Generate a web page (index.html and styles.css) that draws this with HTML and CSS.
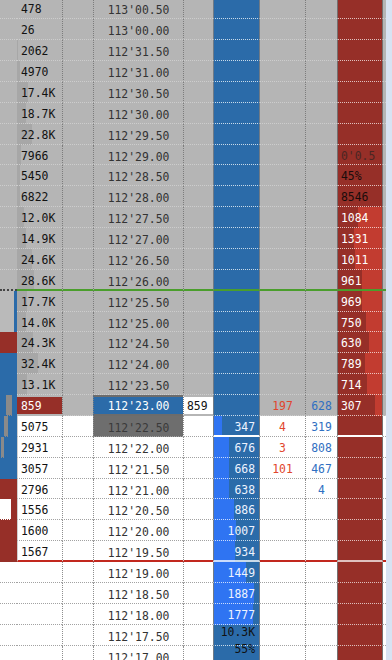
FILE: index.html
```html
<!DOCTYPE html>
<html lang="en">
<head>
  <meta charset="UTF-8" />
  <meta name="viewport" content="width=device-width, initial-scale=1" />
  <title>DOM Ladder</title>
  <link rel="stylesheet" href="styles.css">
</head>
<body>
  <div class="dom">
    <div class="ladder" id="ladder"></div>
    <div class="scroll"></div>
  </div>

  <script>
    // v = traded volume, vb = volume bar, a = ask size, aw = ask bar split,
    // bid = bid size, bw = bid bar, s/b = sold/bought at price, ch = mini chart cell
    const rows = [
      { v: "478" },
      { v: "26" },
      { v: "2062", vb: 1 },
      { v: "4970", vb: 3 },
      { v: "17.4K", vb: 11 },
      { v: "18.7K", vb: 9 },
      { v: "22.8K", vb: 15 },
      { v: "7966", vb: 4, a: "0'0.5", ac: "faint" },
      { v: "5450", vb: 3, a: "45%", ac: "dark" },
      { v: "6822", vb: 3, a: "8546", ac: "dark" },
      { v: "12.0K", vb: 7, a: "1084", aw: 20 },
      { v: "14.9K", vb: 9, a: "1331", aw: 16 },
      { v: "24.6K", vb: 15, a: "1011", aw: 17 },
      { v: "28.6K", vb: 17, a: "961", aw: 24, ch: "edge" },
      { v: "17.7K", vb: 10, a: "969", aw: 24, ch: "gb" },
      { v: "14.0K", vb: 9, a: "750", aw: 28, ch: "gb" },
      { v: "24.3K", vb: 16, a: "630", aw: 31, ch: "red" },
      { v: "32.4K", vb: 21, a: "789", aw: 27, ch: "blue" },
      { v: "13.1K", vb: 10, a: "714", aw: 29, ch: "blue" },
      { v: "859", a: "307", aw: 37, s: "197", b: "628", last: "859", ch: "blue candle1" },
      { v: "5075", bid: "347", bw: 8, s: "4", b: "319", ch: "blue candle2" },
      { v: "2931", bid: "676", bw: 15, s: "3", b: "808", ch: "blue candle3" },
      { v: "3057", bid: "668", bw: 15, s: "101", b: "467", ch: "blue" },
      { v: "2796", bid: "638", bw: 15, b: "4", ch: "red" },
      { v: "1556", bid: "886", bw: 20, ch: "redw" },
      { v: "1600", bid: "1007", bw: 22, ch: "red" },
      { v: "1567", bid: "934", bw: 21, ch: "red" },
      { bid: "1449", bw: 32 },
      { bid: "1887", bw: 40 },
      { bid: "1777", bw: 39 },
      { bid: "10.3K", bc: "dark total" },
      { bid: "55%", bc: "dark ratio" },
    ];

    const ladder = document.getElementById("ladder");

    function priceAt(i) {
      if (i === 0) return "113'00.50";
      if (i === 1) return "113'00.00";
      const t = 31.5 - (i - 2) * 0.5;
      return "112'" + t.toFixed(2).padStart(5, "0");
    }

    function cell(cls, text, w) {
      const d = document.createElement("div");
      d.className = cls;
      if (text) d.textContent = text;
      if (w !== undefined) d.style.setProperty("--w", w + "px");
      return d;
    }

    rows.forEach((r, i) => {
      const row = document.createElement("div");
      row.className = "row " + (i < 20 ? "hi" : "lo");
      if (i === 13) row.classList.add("green");
      if (i === 19) row.classList.add("cur");
      if (i === 20) row.classList.add("mark");
      if (i === 26) row.classList.add("redline");
      if (i > 19 && i < 27) row.classList.add("boxed");

      row.appendChild(cell("chart " + (r.ch || "")));
      row.appendChild(cell("vol" + (r.vb ? " bar" : ""), r.v, r.vb));
      row.appendChild(cell("gap"));
      row.appendChild(cell("price", priceAt(i)));
      row.appendChild(cell("last", r.last));
      row.appendChild(cell("bid" + (r.bw ? " bar" : "") + (r.bc ? " " + r.bc : ""), r.bid, r.bw));
      row.appendChild(cell("sold", r.s));
      row.appendChild(cell("bought", r.b));
      row.appendChild(cell("ask" + (r.aw ? " bar" : "") + (r.ac ? " " + r.ac : ""), r.a, r.aw));
      row.appendChild(cell("edge-col"));
      ladder.appendChild(row);
    });
  </script>
</body>
</html>
```

FILE: styles.css
```css
* {
  box-sizing: border-box;
}
body {
  margin: 0;
  background: #fff;
  font-family: "DejaVu Sans Mono", monospace;
  font-size: 11.4px;
  overflow: hidden;
}
.dom {
  display: flex;
  width: 392px;
  height: 660px;
  overflow: hidden;
}
.ladder {
  width: 386px;
  margin-top: -1.6px;
}
.scroll {
  width: 6px;
  background: #d8e3f3;
}

/* rows */
.row {
  display: grid;
  grid-template-columns: 17px 45px 31px 90px 30px 47px 45px 32px 46px 3px;
  height: 20.88px;
  line-height: 22px;
}
.row > div {
  background: #b5b5b5;
  border-bottom: 1px dotted #cdcdcd;
  white-space: nowrap;
  overflow: hidden;
}
.row.lo > div {
  background: #fff;
  border-bottom-color: #a2a2a2;
}

/* columns */
.vol {
  padding-left: 4px;
  color: #111;
}
.vol.bar {
  background: linear-gradient(90deg, #a7a7a7 var(--w), #b5b5b5 var(--w)) !important;
}
.gap,
.price,
.last,
.bought {
  border-left: 1px dotted #7c7c7c;
}
.row.lo .gap,
.row.lo .price,
.row.lo .last,
.row.lo .bought {
  border-left-color: #8e8e8e;
}
.price {
  text-align: center;
  color: #333;
  line-height: 24px;
}
.last {
  padding-left: 3px;
  color: #111;
}
.sold {
  text-align: center;
  color: #e1462c;
}
.bought {
  text-align: center;
  color: #2f6fc2;
}

.row > .bid {
  background: #2b6ba9;
  border-left: 1px solid #6f7a86;
  border-right: 1px solid #6f7a86;
  border-bottom-color: rgba(255, 255, 255, 0.75);
  text-align: right;
  padding-right: 4px;
  color: #eef3ff;
}
.row.lo > .bid {
  background: #2b6ba9;
  border-bottom-color: rgba(255, 255, 255, 0.75);
}
.row > .bid.bar {
  background: linear-gradient(90deg, #2f74f2 var(--w), #2b6ba9 var(--w));
}
.bid.dark {
  color: #111;
}
.row > .bid.total {
  line-height: 14px;
  overflow: visible;
}
.row > .bid.ratio {
  line-height: 7px;
  overflow: visible;
}

.row > .ask {
  background: #962f28;
  border-left: 1px solid #757070;
  border-right: 1px solid #757070;
  border-bottom-color: rgba(255, 255, 255, 0.7);
  padding-left: 3px;
  color: #fff;
}
.row.lo > .ask {
  background: #962f28;
  border-bottom-color: rgba(255, 255, 255, 0.7);
}
.row > .ask.bar {
  background: linear-gradient(90deg, #962f28 var(--w), #c23c30 var(--w));
}
.ask.faint {
  color: #4a2623;
}
.ask.dark {
  color: #1a0c0b;
}

/* mini chart strip on the left */
.row > .chart.gb {
  background: linear-gradient(90deg, #bababa 14px, #2b6ba9 14px);
  border-bottom-color: transparent;
}
.row > .chart.red {
  background: #962f28;
  border-bottom-color: #962f28;
}
.row > .chart.redw {
  background: linear-gradient(90deg, #fff 11px, #962f28 11px);
  border-bottom-color: #962f28;
}
.row > .chart.blue {
  background: #2b6ba9;
  border-bottom-color: #2b6ba9;
}
.row > .chart.candle1 {
  background: linear-gradient(90deg, #2b6ba9 6px, #8a8a8a 6px, #8a8a8a 12px, #2b6ba9 12px);
}
.row > .chart.candle2 {
  background: linear-gradient(90deg, #2b6ba9 4px, #8a8a8a 4px, #8a8a8a 8px, #2b6ba9 8px);
}
.row > .chart.candle3 {
  background: linear-gradient(90deg, #2b6ba9 1px, #8a8a8a 1px, #8a8a8a 4px, #2b6ba9 4px);
}
.row.boxed > .vol {
  border-left: 1px solid #cfcfcf;
  padding-left: 3px;
}

/* current price row */
.row.cur > .vol {
  background: #962f28;
  color: #fff;
  border-top: 2px solid #b5b5b5;
  border-bottom: 2px solid #b5b5b5;
  line-height: 18px;
}
.row.cur > .price {
  background: #2b6ba9;
  color: #fff;
  border-top: 2px solid #6c6c6c;
  border-bottom: 2px solid #6c6c6c;
  line-height: 18px;
}
.row.cur > .last {
  background: #fff;
  border-top: 2px solid #b5b5b5;
  border-bottom: 2px solid #b5b5b5;
  line-height: 18px;
}
.row.mark > .price {
  background: #6e6e6e;
  color: #3a3a3a;
}
.row.mark > .bid,
.row.mark > .ask {
  border-bottom: 2px solid #fff;
}

/* separator lines */
.row.green > div {
  border-bottom: 2px solid #4a9e2c;
}
.row.green > .chart {
  border-bottom: 2px dotted #444;
}
.row.redline > div {
  border-bottom: 2px solid #c2281e;
}
```
